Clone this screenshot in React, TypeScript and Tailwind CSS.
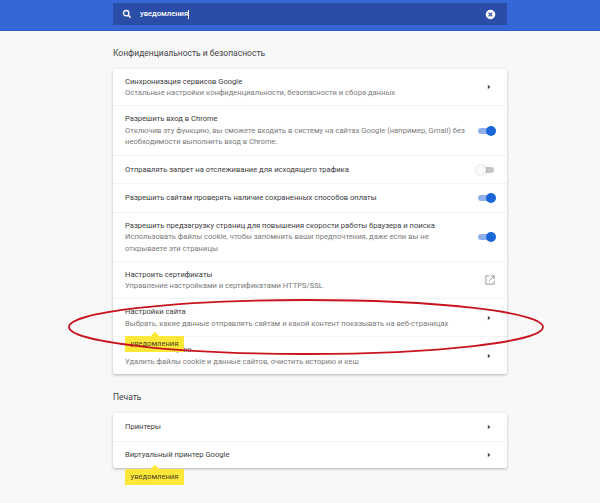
import React from "react";

const font = { fontFamily: "Roboto, sans-serif" };

function Chevron() {
  return (
    <svg width="8" height="8" viewBox="0 0 8 8" className="shrink-0 mr-[2px]">
      <path d="M2.8 1.8 L5.4 4 L2.8 6.2 Z" fill="#4a4a4a" />
    </svg>
  );
}

function Toggle({ on }: { on: boolean }) {
  if (on) {
    return (
      <div className="relative w-[18px] h-[10px] -mr-px shrink-0">
        <div className="absolute left-0 top-[2px] w-[16px] h-[6px] rounded-full bg-[#8fb0e8]" />
        <div className="absolute right-0 top-0 w-[10px] h-[10px] rounded-full bg-[#1a66d8]" />
      </div>
    );
  }
  return (
    <div className="relative w-[18px] h-[10px] mr-px shrink-0">
      <div className="absolute left-[2px] top-[2px] w-[16px] h-[6px] rounded-full bg-[#c4c4c4]" />
      <div className="absolute left-0 top-0 w-[10px] h-[10px] rounded-full bg-[#fafafa] shadow-[0_0_2px_rgba(0,0,0,0.25)]" />
    </div>
  );
}

function Row({
  title,
  sub,
  right,
  h,
  first,
}: {
  title: string;
  sub?: React.ReactNode;
  right: React.ReactNode;
  h: string;
  first?: boolean;
}) {
  return (
    <div className={`flex items-center justify-between pl-[12px] pr-[12px] ${h} ${first ? "" : "border-t border-[#f3f3f3]"}`}>
      <div className="min-w-0">
        <div className="text-[7.6px] leading-[11.5px] whitespace-nowrap text-[#3c3c3c]">{title}</div>
        {sub && <div className="text-[7.6px] leading-[11.5px] whitespace-nowrap text-[#7a7a7a]">{sub}</div>}
      </div>
      {right}
    </div>
  );
}

function Badge({ className }: { className: string }) {
  return (
    <div className={`absolute ${className} h-[16px] w-[59px] bg-[#fde83a] text-[7.6px] leading-[16px] text-center text-[#4a4420]`}>
      <div className="absolute left-[27px] -top-[3px] w-[6px] h-[6px] rotate-45 bg-[#fde83a]" />
      <span className="relative">уведомления</span>
    </div>
  );
}

export default function App() {
  return (
    <div className="relative w-[600px] h-[503px] overflow-hidden bg-[#f8f8f8]" style={font}>
      <div className="h-[31px] bg-[#3568d6] border-b border-[#2f5cc0] pl-[113px] pt-[3px]">
        <div className="w-[394px] h-[22px] bg-[#2a4da8] flex items-center pl-[9px] pr-[11px] text-white">
          <svg width="10" height="10" viewBox="0 0 24 24" fill="none" stroke="white" strokeWidth="3.2" className="shrink-0">
            <circle cx="10" cy="10" r="6.5" />
            <path d="M15 15 L21 21" />
          </svg>
          <span className="ml-[8px] text-[7.6px] font-medium">уведомления</span>
          <span className="w-px h-[9px] bg-white" />
          <svg width="11" height="11" viewBox="0 0 12 12" className="ml-auto">
            <circle cx="6" cy="6" r="5.2" fill="white" />
            <path d="M4 4 L8 8 M8 4 L4 8" stroke="#2a4da8" strokeWidth="1.4" />
          </svg>
        </div>
      </div>

      <div className="w-[394px] ml-[113px]">
        <div className="mt-[16px] h-[12px] text-[8.5px] leading-[12px] text-[#444]">Конфиденциальность и безопасность</div>
        <div className="mt-[10px] bg-white rounded-[2px] shadow-[0_1px_3px_rgba(0,0,0,0.28)]">
          <Row first h="h-[36px]" title="Синхронизация сервисов Google" sub="Остальные настройки конфиденциальности, безопасности и сбора данных" right={<Chevron />} />
          <Row
            h="h-[50px]"
            title="Разрешить вход в Chrome"
            sub={<>Отключив эту функцию, вы сможете входить в систему на сайтах Google (например, Gmail) без<br />необходимости выполнить вход в Chrome.</>}
            right={<Toggle on />}
          />
          <Row h="h-[28px]" title="Отправлять запрет на отслеживание для исходящего трафика" right={<Toggle on={false} />} />
          <Row h="h-[29px]" title="Разрешить сайтам проверять наличие сохраненных способов оплаты" right={<Toggle on />} />
          <Row
            h="h-[49px]"
            title="Разрешить предзагрузку страниц для повышения скорости работы браузера и поиска"
            sub={<>Использовать файлы cookie, чтобы запомнить ваши предпочтения, даже если вы не<br />открываете эти страницы</>}
            right={<Toggle on />}
          />
          <Row
            h="h-[37px]"
            title="Настроить сертификаты"
            sub="Управление настройками и сертификатами HTTPS/SSL"
            right={
              <svg width="10" height="10" viewBox="0 0 12 12" fill="none" stroke="#8f8f8f" strokeWidth="1.1" className="shrink-0">
                <path d="M5 1 H1 V11 H11 V7 M7 1 H11 V5 M11 1 L5 7" />
              </svg>
            }
          />
          <Row h="h-[38px]" title="Настройки сайта" sub="Выбрать, какие данные отправлять сайтам и какой контент показывать на веб-страницах" right={<Chevron />} />
          <Row h="h-[38px]" title="Очистить историю" sub="Удалить файлы cookie и данные сайтов, очистить историю и кеш" right={<Chevron />} />
        </div>

        <div className="mt-[17px] h-[12px] text-[8.5px] leading-[12px] text-[#444]">Печать</div>
        <div className="mt-[10px] bg-white rounded-[2px] shadow-[0_1px_3px_rgba(0,0,0,0.28)]">
          <Row first h="h-[28px]" title="Принтеры" right={<Chevron />} />
          <Row h="h-[27px]" title="Виртуальный принтер Google" right={<Chevron />} />
        </div>
      </div>

      <Badge className="left-[125px] top-[336px]" />
      <Badge className="left-[125px] top-[469px]" />

      <svg className="absolute left-0 top-0 pointer-events-none" width="600" height="503" viewBox="0 0 600 503" fill="none">
        <ellipse cx="306" cy="327" rx="237" ry="27" stroke="#c8141e" strokeWidth="1.8" />
      </svg>
    </div>
  );
}
